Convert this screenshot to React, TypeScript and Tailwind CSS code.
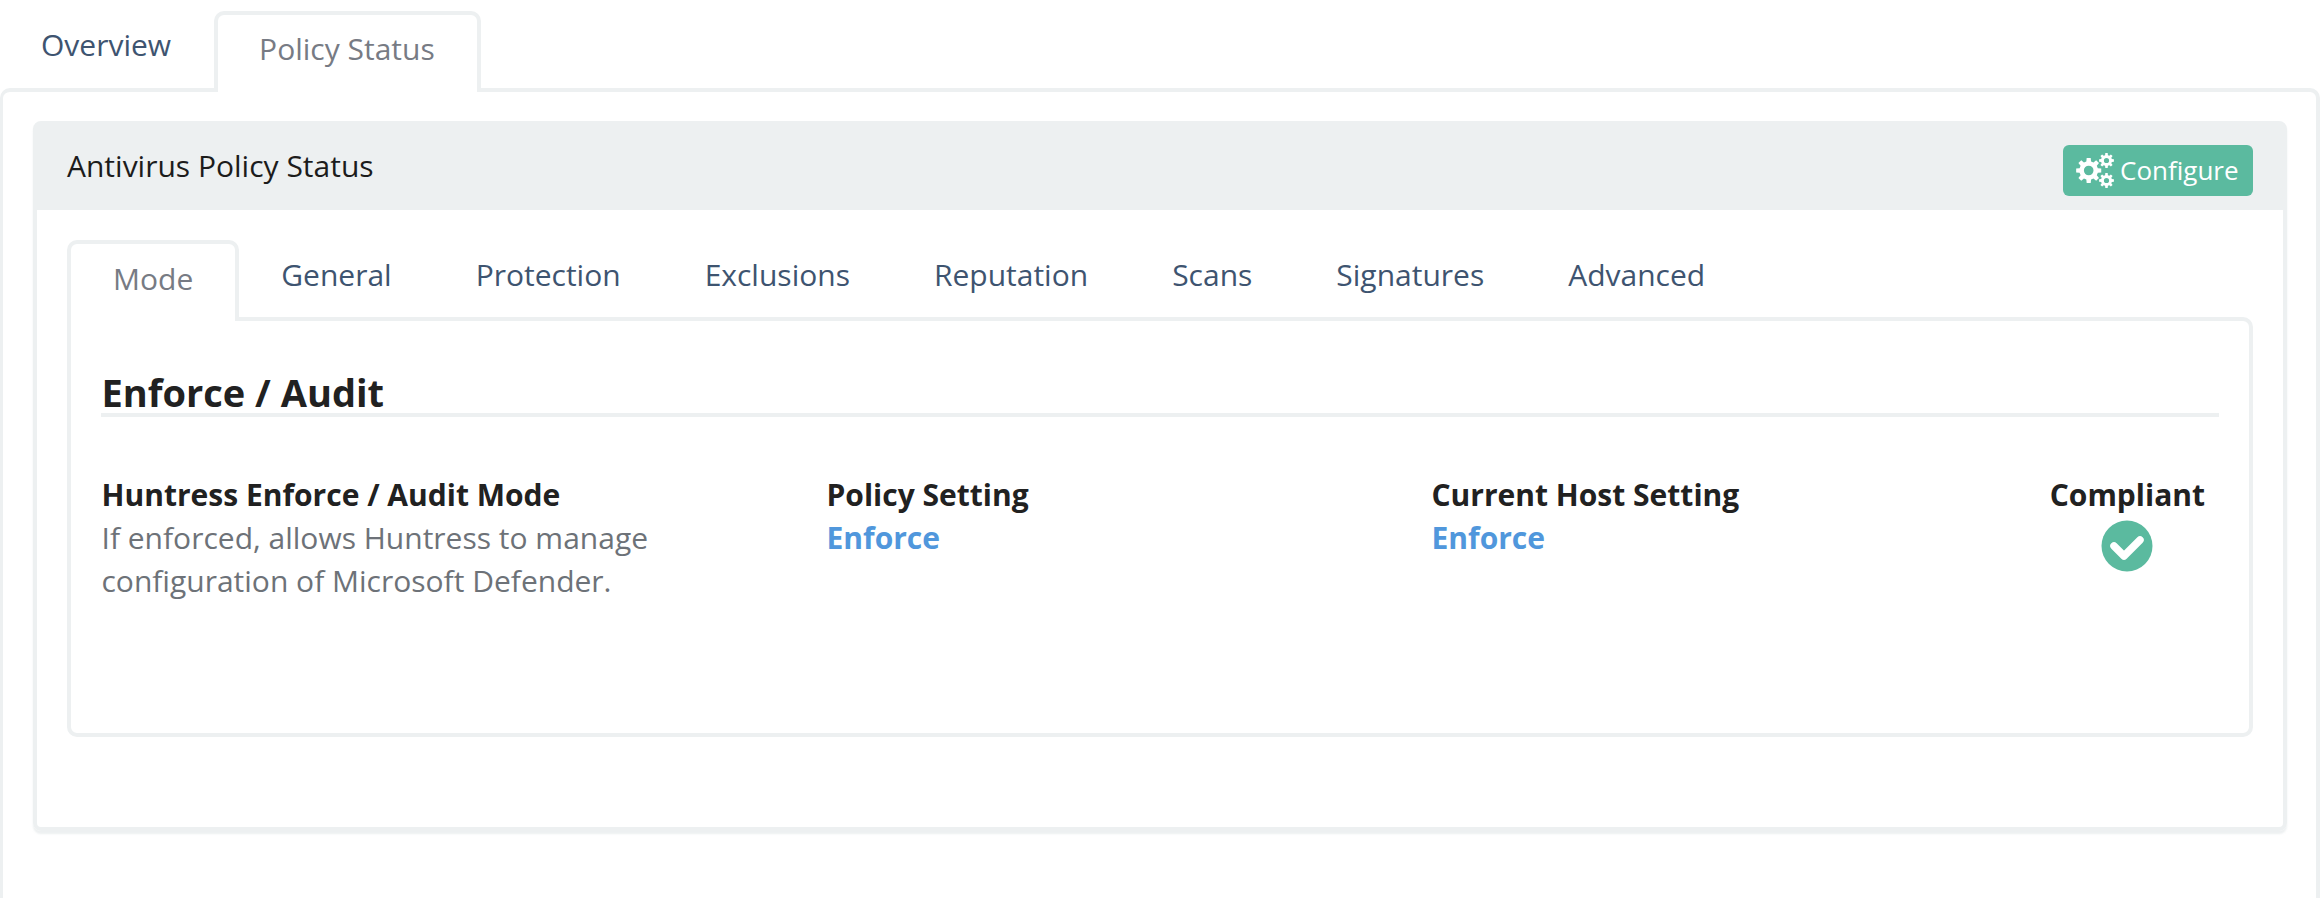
import { useMemo } from 'react'

const innerTabs = ['General', 'Protection', 'Exclusions', 'Reputation', 'Scans', 'Signatures', 'Advanced']

// small gear shape for the Configure icon
function Gear({ cx, cy, r, hole, teeth }: { cx: number; cy: number; r: number; hole: number; teeth: number }) {
  const d = useMemo(() => {
    const pts: string[] = []
    const inner = r * 0.74
    const step = (Math.PI * 2) / teeth
    for (let i = 0; i < teeth; i++) {
      const a = i * step
      const w = step * 0.24
      const at = (rad: number, ang: number) => `${(cx + rad * Math.cos(ang)).toFixed(2)} ${(cy + rad * Math.sin(ang)).toFixed(2)}`
      pts.push(at(inner, a - w * 1.35), at(r, a - w * 0.85), at(r, a + w * 0.85), at(inner, a + w * 1.35))
    }
    return `M${pts.join('L')}Z M${cx + hole} ${cy}A${hole} ${hole} 0 1 0 ${cx - hole} ${cy}A${hole} ${hole} 0 1 0 ${cx + hole} ${cy}Z`
  }, [cx, cy, r, hole, teeth])
  return <path d={d} fillRule="evenodd" />
}

function GearsIcon() {
  return (
    <svg viewBox="0 0 38 35" className="h-[35px] w-[38px] fill-white">
      <Gear cx={12.7} cy={17.5} r={12.7} hole={4.8} teeth={8} />
      <Gear cx={30.5} cy={7.5} r={7.5} hole={2.6} teeth={8} />
      <Gear cx={30.5} cy={27.5} r={7.5} hole={2.6} teeth={8} />
    </svg>
  )
}

function CheckIcon() {
  return (
    <svg viewBox="0 0 52 52" className="mt-[4px] h-[52px] w-[52px]">
      <circle cx="26" cy="26" r="25.5" fill="#5bba9f" />
      <path d="M13 26 L23 36 L39 20" fill="none" stroke="#fff" strokeWidth="7.5" strokeLinecap="round" strokeLinejoin="round" />
    </svg>
  )
}

export default function App() {
  return (
    <div className="h-[898px] overflow-hidden bg-white pt-[11px] font-['Open_Sans',sans-serif] text-[30px] leading-[43px] text-[#212121] antialiased">
      {/* Top tabs */}
      <div className="relative z-10 -mb-1 flex h-[81px] items-start">
        <a className="pl-[41px] pr-[43px] pt-[12px] text-[#3e5470]">Overview</a>
        <a className="h-[81px] rounded-t-[10px] border-4 border-b-0 border-[#edf0f1] bg-white pl-[41px] pr-[42px] pt-[12px] text-[#777b84]">
          Policy Status
        </a>
      </div>

      <div className="h-[830px] rounded-tl-[10px] rounded-tr-[10px] border-4 border-l-[3px] border-[#edf0f1] p-[29px] pl-[30px]">
        {/* Antivirus panel */}
        <div className="h-[710px] rounded-[8px] border-4 border-[#edf0f1] shadow-[0_3px_2px_rgba(230,234,235,0.7)]">
          <div className="flex h-[85px] items-center justify-between bg-[#edf0f1] pl-[30px] pr-[30px]">
            <h2 className="-mt-[4px] text-[30px] font-normal text-[#1c1c1c]">Antivirus Policy Status</h2>
            <button className="mt-[6px] flex h-[51px] w-[190px] items-center gap-[6px] rounded-[6px] bg-[#5bba9f] pl-[13px] text-[26px] text-white">
              <GearsIcon />
              Configure
            </button>
          </div>

          <div className="px-[30px] pt-[30px]">
            {/* Inner tabs */}
            <div className="relative z-10 -mb-1 flex h-[81px] items-start">
              <a className="h-[81px] rounded-t-[10px] border-4 border-b-0 border-[#edf0f1] bg-white px-[42px] pt-[13px] text-[#777b84]">
                Mode
              </a>
              {innerTabs.map(t => (
                <a key={t} className="px-[42px] pt-[13px] text-[#3e5470]">{t}</a>
              ))}
            </div>

            {/* Mode content */}
            <div className="h-[420px] rounded-[10px] rounded-tl-none border-4 border-[#edf0f1] px-[30px] pt-[50px]">
              <h3 className="h-[46px] border-b-4 border-[#edf0f1] pl-[0.5px] text-[38px] font-bold leading-[43px]">Enforce / Audit</h3>
              <div className="mt-[56px] grid grid-cols-[725px_605px_1fr_auto] pl-[0.5px] pr-[14px]">
                <div>
                  <div className="font-bold">Huntress Enforce / Audit Mode</div>
                  <div className="text-[#6d7278]">
                    If enforced, allows Huntress to manage
                    <br />
                    configuration of Microsoft Defender.
                  </div>
                </div>
                <div>
                  <div className="font-bold">Policy Setting</div>
                  <div className="font-bold text-[#5097dc]">Enforce</div>
                </div>
                <div>
                  <div className="font-bold">Current Host Setting</div>
                  <div className="font-bold text-[#5097dc]">Enforce</div>
                </div>
                <div className="flex flex-col items-center">
                  <div className="font-bold">Compliant</div>
                  <CheckIcon />
                </div>
              </div>
            </div>
          </div>
        </div>
      </div>
    </div>
  )
}
